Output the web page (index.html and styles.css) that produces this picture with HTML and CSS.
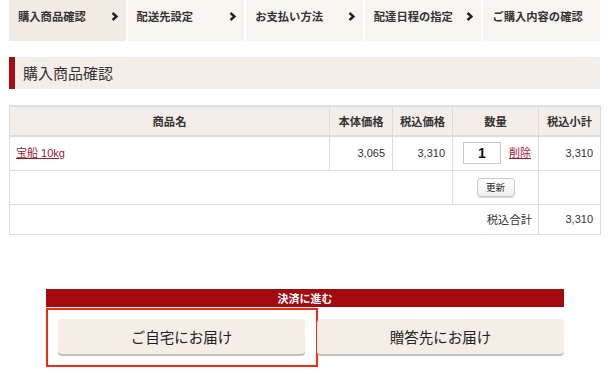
FILE: index.html
```html
<!DOCTYPE html>
<html lang="ja">
<head>
<meta charset="utf-8">
<link rel="stylesheet" href="styles.css">
</head>
<body>
<div class="page">
  <ol class="steps">
    <li class="step active"><span>購入商品確認</span><svg class="chev" width="7" height="9" viewBox="0 0 7 9"><polyline points="1.5,1 5.5,4.5 1.5,8" fill="none" stroke="#222" stroke-width="2.4"/></svg></li>
    <li class="step"><span>配送先設定</span><svg class="chev" width="7" height="9" viewBox="0 0 7 9"><polyline points="1.5,1 5.5,4.5 1.5,8" fill="none" stroke="#222" stroke-width="2.4"/></svg></li>
    <li class="step"><span>お支払い方法</span><svg class="chev" width="7" height="9" viewBox="0 0 7 9"><polyline points="1.5,1 5.5,4.5 1.5,8" fill="none" stroke="#222" stroke-width="2.4"/></svg></li>
    <li class="step"><span>配達日程の指定</span><svg class="chev" width="7" height="9" viewBox="0 0 7 9"><polyline points="1.5,1 5.5,4.5 1.5,8" fill="none" stroke="#222" stroke-width="2.4"/></svg></li>
    <li class="step"><span>ご購入内容の確認</span></li>
  </ol>

  <h2 class="heading">購入商品確認</h2>

  <table class="cart">
    <colgroup>
      <col class="c-name"><col class="c-price"><col class="c-tax"><col class="c-qty"><col class="c-sub">
    </colgroup>
    <thead>
      <tr class="head-row">
        <th>商品名</th><th>本体価格</th><th>税込価格</th><th>数量</th><th>税込小計</th>
      </tr>
    </thead>
    <tbody>
      <tr class="item-row">
        <td class="name"><a href="#" class="link">宝船 10kg</a></td>
        <td class="num">3,065</td>
        <td class="num">3,310</td>
        <td class="qty"><span class="qty-box">1</span><a href="#" class="link del">削除</a></td>
        <td class="num">3,310</td>
      </tr>
      <tr class="update-row">
        <td colspan="3"></td>
        <td class="center"><button class="update">更新</button></td>
        <td></td>
      </tr>
      <tr class="total-row">
        <td colspan="4" class="label">税込合計</td>
        <td class="num">3,310</td>
      </tr>
    </tbody>
  </table>

  <div class="checkout">
    <div class="checkout-bar">決済に進む</div>
    <div class="choices">
      <div class="choice highlighted"><button class="deliver">ご自宅にお届け</button></div>
      <div class="choice"><button class="deliver">贈答先にお届け</button></div>
    </div>
  </div>
</div>
</body>
</html>
```

FILE: styles.css
```css
* { box-sizing: border-box; }
html, body { min-height: 374px; }
body {
  margin: 0;
  font-family: "Liberation Sans", "Noto Sans CJK JP", sans-serif;
  color: #333;
  background: #fff;
}
.page {
  width: 609px;
  padding-left: 9px;
  padding-bottom: 20px;
}
.steps {
  list-style: none;
  margin: 0;
  padding: 0;
  display: flex;
  gap: 2px;
  width: 591px;
}
.step {
  flex: 1;
  height: 41px;
  background: #f8f5f1;
  display: flex;
  justify-content: space-between;
  align-items: flex-start;
  padding: 9px 8px 0 9px;
  font-family: "Noto Sans CJK JP", sans-serif;
  font-size: 11.3px;
  font-weight: bold;
  line-height: 14px;
  color: #333;
  white-space: nowrap;
}
.step.active { background: #f2ebe4; }
.chev { margin-top: 3px; flex: none; }

.heading {
  margin: 16px 0 0;
  width: 591px;
  height: 32px;
  background: #f4eee8;
  border-left: 6px solid #a50d13;
  padding-left: 8px;
  font-family: "Noto Sans CJK JP", sans-serif;
  font-size: 15px;
  font-weight: normal;
  line-height: 32px;
  color: #333;
}

.cart {
  margin-top: 16px;
  width: 591px;
  border-collapse: collapse;
  table-layout: fixed;
  font-size: 11px;
  border-top: 2px solid #e0e0e0;
}
.c-name { width: 320px; }
.c-price { width: 63px; }
.c-tax { width: 60px; }
.c-qty { width: 86px; }
.c-sub { width: 62px; }
.cart th, .cart td {
  border: 1px solid #dcdcdc;
  padding: 0 7px;
  line-height: 14px;
}
.cart th {
  background: #f4eee8;
  font-family: "Noto Sans CJK JP", sans-serif;
  font-size: 11.3px;
  font-weight: bold;
  color: #333;
  height: 30px;
  padding: 0 2px;
  white-space: nowrap;
  text-align: center;
  border-bottom: 2px solid #e0dcd8;
}
.item-row td { height: 34px; vertical-align: middle; }
.update-row td { height: 34px; }
.total-row td { height: 30px; }
.num {
  text-align: right;
  color: #333;
  font-size: 11px;
}
.item-row .num { vertical-align: middle; padding-bottom: 1px; }
.name { padding-left: 6px !important; padding-bottom: 1px !important; }
.link {
  color: #a3162f;
  text-decoration: underline;
  font-family: "Liberation Sans", "Noto Sans CJK JP", sans-serif;
  font-size: 11px;
}
.qty { white-space: nowrap; padding-left: 10px !important; }
.qty-box {
  display: inline-block;
  width: 38px;
  height: 22px;
  border: 1px solid #c8c8c8;
  text-align: center;
  font-size: 14px;
  font-weight: bold;
  line-height: 20px;
  color: #111;
  vertical-align: middle;
}
.del { margin-left: 8px; vertical-align: middle; }
.center { text-align: center; }
.update {
  width: 38px;
  height: 19px;
  padding: 0;
  border: 1px solid #c8c8c8;
  border-radius: 4px;
  background: linear-gradient(#ffffff, #f0f0f0);
  font-family: "Noto Sans CJK JP", sans-serif;
  font-size: 9.5px;
  line-height: 17px;
  color: #222;
  box-shadow: 0 1px 0 #ddd;
}
.label {
  text-align: right;
  font-family: "Noto Sans CJK JP", sans-serif;
  font-size: 11.3px;
  padding-right: 6px !important;
}

.checkout {
  margin: 54px 0 0 37px;
  width: 518px;
}
.checkout-bar {
  height: 18px;
  background: #a50a0e;
  color: #fff;
  text-align: center;
  font-family: "Noto Sans CJK JP", sans-serif;
  font-size: 11px;
  font-weight: bold;
  line-height: 18px;
}
.choices {
  display: flex;
}
.choice {
  flex: 1;
  display: flex;
  align-items: flex-start;
  padding: 12px 0 0 12px;
  height: 56px;
  position: relative;
}
.highlighted::after {
  content: "";
  position: absolute;
  left: 0;
  top: 1px;
  width: 268px;
  height: 55px;
  border: 2px solid #f62b0e;
}
.deliver {
  width: 247px;
  height: 35px;
  padding: 0;
  border: none;
  border-radius: 4px;
  background: #f4eee7;
  box-shadow: 0 2px 0 #c2c0bd;
  font-family: "Noto Sans CJK JP", sans-serif;
  font-size: 14.5px;
  color: #222;
  line-height: 35px;
}
```
